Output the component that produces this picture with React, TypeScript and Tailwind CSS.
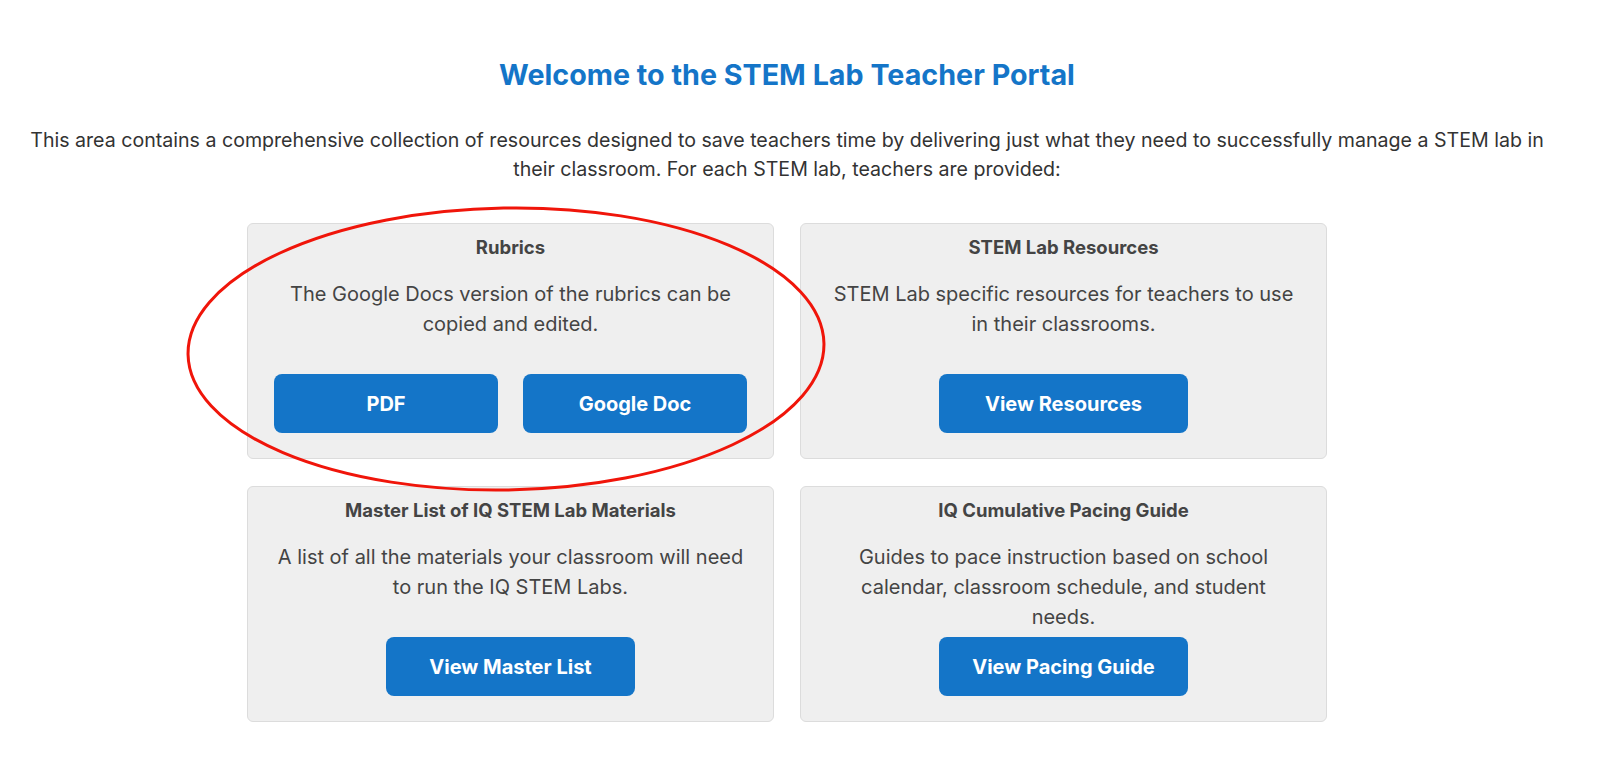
import React from 'react'

type Card = {
  title: string
  text: string
  buttons: { label: string; w: string }[]
}

const cards: Card[] = [
  {
    title: 'Rubrics',
    text: 'The Google Docs version of the rubrics can be copied and edited.',
    buttons: [
      { label: 'PDF', w: 'w-[224px]' },
      { label: 'Google Doc', w: 'w-[224px]' },
    ],
  },
  {
    title: 'STEM Lab Resources',
    text: 'STEM Lab specific resources for teachers to use in their classrooms.',
    buttons: [{ label: 'View Resources', w: 'w-[249px]' }],
  },
  {
    title: 'Master List of IQ STEM Lab Materials',
    text: 'A list of all the materials your classroom will need to run the IQ STEM Labs.',
    buttons: [{ label: 'View Master List', w: 'w-[249px]' }],
  },
  {
    title: 'IQ Cumulative Pacing Guide',
    text: 'Guides to pace instruction based on school calendar, classroom schedule, and student needs.',
    buttons: [{ label: 'View Pacing Guide', w: 'w-[249px]' }],
  },
]

function ResourceCard({ card }: { card: Card }) {
  return (
    <div className="flex min-h-[236px] flex-col items-center rounded-md border border-[#dcdcdc] bg-[#efefef] px-[26px] pt-[12px] pb-[25px] text-center">
      <h3 className="text-[18.5px] font-bold leading-[23px] text-[#444]">{card.title}</h3>
      <p className="mt-[20px] mb-[5px] max-w-[466px] text-[20px] leading-[30px] text-[#444]">{card.text}</p>
      <div className="mt-auto flex gap-[25px]">
        {card.buttons.map((b) => (
          <button
            key={b.label}
            className={`${b.w} h-[59px] rounded-lg bg-[#1475c8] text-[20px] font-bold text-white`}
          >
            {b.label}
          </button>
        ))}
      </div>
    </div>
  )
}

export default function App() {
  return (
    <div className="min-h-[769px] bg-white" style={{ fontFamily: "Inter, 'Noto Sans', sans-serif" }}>
      <div className="relative w-[1574px] pt-[57px]">
        <h1 className="text-center text-[28.7px] font-bold leading-[36px] text-[#1475c8]">
          Welcome to the STEM Lab Teacher Portal
        </h1>
        <p className="mx-auto mt-[33px] max-w-[1530px] text-center text-[19.6px] leading-[29px] text-[#333]">
          This area contains a comprehensive collection of resources designed to save teachers time by delivering just what they need to successfully manage a STEM lab in their classroom. For each STEM lab, teachers are provided:
        </p>
        <div className="mx-auto mt-[39px] grid w-[1080px] auto-rows-fr grid-cols-2 gap-x-[26px] gap-y-[27px]">
          {cards.map((c) => (
            <ResourceCard key={c.title} card={c} />
          ))}
        </div>
        <svg className="pointer-events-none absolute left-0 top-0" width="1600" height="769">
          <ellipse
            cx="506"
            cy="349"
            rx="318"
            ry="141"
            transform="rotate(-1 506 349)"
            fill="none"
            stroke="#f0150a"
            strokeWidth="3"
          />
        </svg>
      </div>
    </div>
  )
}
